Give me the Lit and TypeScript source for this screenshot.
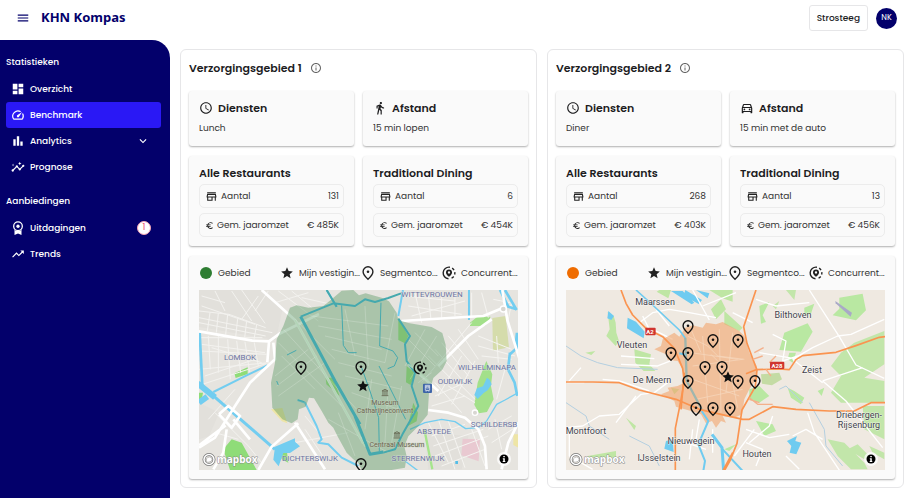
import { LitElement, html, svg, css } from "lit";
import { customElement, property } from "lit/decorators.js";

const icons: Record<string, unknown> = {
  menu: svg`<path d="M3 18h18v-2H3v2zm0-5h18v-2H3v2zm0-7v2h18V6H3z"/>`,
  dashboard: svg`<path d="M3 13h8V3H3v10zm0 8h8v-6H3v6zm10 0h8V11h-8v10zm0-18v6h8V3h-8z"/>`,
  speed: svg`<path d="M20.38 8.57l-1.23 1.85a8 8 0 0 1-.22 7.58H5.07A8 8 0 0 1 15.58 6.85l1.85-1.23A10 10 0 0 0 3.35 19a2 2 0 0 0 1.72 1h13.85a2 2 0 0 0 1.74-1 10 10 0 0 0-.27-10.44zm-9.79 6.84a2 2 0 0 0 2.83 0l5.66-8.49-8.49 5.66a2 2 0 0 0 0 2.83z"/>`,
  bars: svg`<path d="M4 9h4v11H4zm12 4h4v7h-4zm-6-9h4v16h-4z"/>`,
  insights: svg`<path d="M21 8c-1.45 0-2.26 1.44-1.93 2.51l-3.55 3.56c-.3-.09-.74-.09-1.04 0l-2.55-2.55C12.27 10.45 11.46 9 10 9c-1.45 0-2.27 1.44-1.93 2.52l-4.56 4.55C2.44 15.74 1 16.55 1 18c0 1.1.9 2 2 2 1.45 0 2.26-1.44 1.93-2.51l4.55-4.56c.3.09.74.09 1.04 0l2.55 2.55C12.73 16.55 13.54 18 15 18c1.45 0 2.27-1.44 1.93-2.52l3.56-3.55C21.56 12.26 23 11.45 23 10c0-1.1-.9-2-2-2z"/><path d="M15 9l.94-2.07L18 6l-2.06-.93L15 3l-.92 2.07L12 6l2.08.93zM3.5 11L4 9l2-.5L4 8l-.5-2L3 8l-2 .5L3 9z"/>`,
  award: svg`<circle cx="12" cy="9" r="7.4" fill="none" stroke="currentColor" stroke-width="2.2"/><circle cx="12" cy="9" r="2.8"/><path d="M6 15v9l6-2.4 6 2.4v-9l-2.500 1.600H8.500z"/>`,
  trend: svg`<path d="M16 6l2.290 2.290-4.880 4.880-4-4L2 16.590 3.410 18l6-6 4 4 6.300-6.290L22 12V6z"/>`,
  chevron: svg`<path d="M7.410 8.590L12 13.170l4.590-4.580L18 10l-6 6-6-6z"/>`,
  info: svg`<path d="M11 7h2v2h-2zm0 4h2v6h-2zm1-9C6.480 2 2 6.480 2 12s4.480 10 10 10 10-4.480 10-10S17.520 2 12 2zm0 18c-4.410 0-8-3.590-8-8s3.590-8 8-8 8 3.590 8 8-3.590 8-8 8z"/>`,
  clock: svg`<path d="M11.990 2C6.470 2 2 6.480 2 12s4.470 10 9.990 10C17.520 22 22 17.520 22 12S17.520 2 11.990 2zM12 20c-4.420 0-8-3.580-8-8s3.580-8 8-8 8 3.580 8 8-3.580 8-8 8zm.5-13H11v6l5.250 3.150.750-1.230-4.500-2.670z"/>`,
  walk: svg`<path d="M13.500 5.500c1.100 0 2-.9 2-2s-.9-2-2-2-2 .9-2 2 .9 2 2 2zM9.800 8.900L7 23h2.100l1.800-8 2.100 2v6h2v-7.500l-2.100-2 .6-3C14.800 12 16.800 13 19 13v-2c-1.900 0-3.500-1-4.300-2.400l-1-1.600c-.4-.6-1-1-1.700-1-.3 0-.5.1-.8.1L6 8.300V13h2V9.600l1.800-.7"/>`,
  car: svg`<path d="M18.920 6.010C18.720 5.420 18.160 5 17.500 5h-11c-.66 0-1.210.42-1.420 1.010L3 12v8c0 .55.45 1 1 1h1c.55 0 1-.45 1-1v-1h12v1c0 .55.45 1 1 1h1c.55 0 1-.45 1-1v-8l-2.080-5.990zM6.850 7h10.290l1.080 3.110H5.770L6.850 7zM19 17H5v-5h14v5z"/><circle cx="7.500" cy="14.500" r="1.500"/><circle cx="16.500" cy="14.500" r="1.500"/>`,
  store: svg`<path d="M18.360 9l.6 3H5.040l.6-3h12.720M20 4H4v2h16V4zm0 3H4l-1 5v2h1v6h10v-6h4v6h2v-6h1v-2l-1-5zM6 18v-4h6v4H6z"/>`,
  euro: svg`<path d="M15 18.500c-2.510 0-4.680-1.420-5.760-3.500H15v-2H8.580c-.05-.33-.08-.66-.08-1s.03-.67.08-1H15V9H9.240C10.320 6.920 12.500 5.500 15 5.500c1.610 0 3.090.59 4.230 1.570L21 5.300C19.410 3.870 17.300 3 15 3c-3.920 0-7.240 2.510-8.480 6H3v2h3.060c-.04.33-.06.66-.06 1s.02.67.06 1H3v2h3.520c1.240 3.490 4.560 6 8.480 6 2.310 0 4.410-.87 6-2.300l-1.780-1.770c-1.130.98-2.600 1.570-4.220 1.570z"/>`,
  star: svg`<path d="M12 17.270L18.180 21l-1.640-7.030L22 9.240l-7.190-.61L12 2 9.190 8.630 2 9.240l5.460 4.730L5.820 21z"/>`,
  pin: svg`<path d="M12 22.600C6.500 17.600 3.600 13.800 3.600 9.800a8.400 8.400 0 0 1 16.800 0c0 4-2.900 7.800-8.400 12.800z" fill="none" stroke="currentColor" stroke-width="2.400"/><circle cx="12" cy="9.800" r="2.200"/>`,
  rival: svg`<circle cx="12" cy="12" r="10" fill="none" stroke="currentColor" stroke-width="2.400" stroke-dasharray="31.400 4 4.400 3.600 4.400 3.600 4.400 7.030" transform="rotate(95 12 12)"/><path fill-rule="evenodd" d="M12 18.500c-3.600-3-5.200-5.300-5.200-7.500a5.200 5.200 0 0 1 10.400 0c0 2.200-1.600 4.500-5.200 7.500zM12 9a2 2 0 1 0 0 4 2 2 0 0 0 0-4z"/>`,
};

@customElement("app-icon")
class AppIcon extends LitElement {
  @property() name = "";
  static styles = css`
    :host { display: inline-flex; flex: none; width: 14px; height: 14px; }
    svg { width: 100%; height: 100%; fill: currentColor; overflow: visible; }
  `;
  render() {
    return html`<svg viewBox="0 0 24 24" aria-hidden="true">${icons[this.name]}</svg>`;
  }
}

const marker = (name: string, x: number, y: number, size = 14) =>
  svg`<svg class="marker" x=${x - size / 2} y=${y - size / 2} width=${size} height=${size} viewBox="0 0 24 24">${icons[name]}</svg>`;

const label = (text: string, x: number, y: number, kind: string) =>
  svg`<text class=${kind} x=${x} y=${y}>${text}</text>`;

const attribution = svg`
  <g fill="none" stroke="#777" stroke-width="3"><circle cx="10" cy="169.500" r="5"/></g>
  <circle cx="10" cy="169.500" r="5" fill="none" stroke="#fff" stroke-width="1.500"/>
  <path d="M7.500 172c-.6-2.600.4-5 3-5a2.400 2.400 0 0 1 .3 4.800c-1 .4-2.200.5-3.300.2z" fill="#fff" stroke="#888" stroke-width=".5"/>
  <text class="brand" x="18" y="173">mapbox</text>
  <circle cx="305" cy="169" r="7" fill="#fff" fill-opacity=".75"/>
  <circle cx="305" cy="169" r="4.500" fill="#000"/>
  <path d="M304.300 166h1.500v1.300h-1.500zM303.800 168.200h2v2.700h.5v1h-2.600v-1h.6v-1.700h-.5z" fill="#fff"/>`;

const cityMap = svg`
  <rect width="320" height="180" fill="#e6e4df"/>
  <g transform="scale(.3333) translate(-12 -12)" fill="none" stroke-linejoin="round">
    <path fill="#dedcd7" d="M12 12h190l60 60-20 90-230-40zM690 440l130 10-20 100H700zM12 350l60 30-30 70-30 10z" opacity=".5"/>
    <path fill="#8fdc78" d="M85 490l25-30 30 10 45 82h-80zM118 262l40-18v20l-36 12zM255 490l20 0 5 40-20-10zM12 320l12 0-4 22-8 0z"/>
    <path fill="#a3e08a" d="M825 110l22-18h40l-8 18-10 10h-44zM874 225l18 40-4 35 8 40-20 38-24 4-14-26 10-66zM610 95l30 55-10 22-20-10zM635 240l26 22-14 35-14-8zM655 350l14 30-4 26-26 14zM392 275l22 0 20 55-40-35z"/>
    <path fill="#d5dcab" d="M892 96l40-6 10 94-48 10z"/>
    <path fill="#e9c9d1" d="M803 458l52 2-4 66-52-18z"/>
    <path fill="#eee5a6" d="M228 370l34-4 15 46-16-6zM955 445h15v40l-15-8z"/>
    <path stroke="#f3f2ef" stroke-width="3" d="M12 75l90 10 110 40M20 60l160 55M12 95l220 45M45 80l-8 55M70 82l-6 58M98 86l-6 60M128 98l-6 55M155 105l-6 50M185 116l-8 44M12 110l200 40M12 155h190M20 175l190 25M14 195l200 10M12 250l210-20M40 150l6 100M70 150v110M98 160l8 120M125 165l12 95M150 168l14 90M178 170l12 70M50 185l150 45M30 270l150-50M22 295l190-62M40 400l80-90M60 380l50 50M110 15l60 90M60 15l30 60M140 12l70 100M190 30l-50 70M220 15l-40 60M20 30l70 20M250 15l120 90M290 15l60 50M240 50l100-30M320 35l90 20M100 420l60 60 40 50M60 440l70 20M300 470l160-30M330 430l60 90M330 390l50 60"/>
    <path stroke="#f5f4f1" stroke-width="3" d="M640 60l160 25M630 30l150 15M660 20l20 90M700 22l8 80M740 20v75M780 20v70M830 20v75M860 20l20 75M650 90l160-45M790 130l60 90M760 150l80 95M740 170l80 100M720 190l80 90M700 210l90 90M830 110l-150 180M800 210l-70 120M840 225l-70 130M780 280l60 60M760 300l80 50M850 150l100 40M850 180l110 30M860 210l90 10M905 150l5 80M930 250l-25 90M720 330l90-40M710 360l100-30M720 290l80 90M700 410l60 120M730 400l50 150M760 405l50 140M710 450l100-35M715 480l150-50M720 510l160-60M740 540l130-50M830 430l40 110M900 400l20 90M880 430l70-40M890 470l70-45M930 60l20 90M950 50l-10 50M895 40l50 10"/>
    <path stroke="#72cdf0" stroke-width="8" d="M14 140l8 160"/>
    <path stroke="#72cdf0" stroke-width="18" d="M8 292l52 42M12 350l25-18"/>
    <path stroke="#72cdf0" stroke-width="9" d="M50 325l190 165"/>
    <path stroke="#72cdf0" stroke-width="6" d="M55 318l100-50 62-30M395 12l30 50M822 12v90M308 342l22 8 35 70 15 40-10 10 30 5 40 40 50 25"/>
    <path stroke="#72cdf0" stroke-width="4" d="M645 430L690 410 740 400 780 407 812 428 850 425 875 405 905 355 930 342 970 320M630 525l40 30"/>
    <path stroke="#72cdf0" stroke-width="8" d="M915 12l25 50 25 8M930 12l35 60M945 200l-6 50 20 40 8 40M945 205l22-20"/>
    <path fill="#72cdf0" d="M240 482l60-25 0 10 15 14-30 20-20 0-14 40-16-20zM876 275l8 6 6 14-12 18-12 8-18 18-10-12 8-20 18-6zM962 140l8 0v50l-12-10z"/>
    <path stroke="#fff" stroke-width="8" d="M12 136l160 28 50 2 30-22 120-60M235 170l5 50-75 70-45 70-60 95-48 30M222 168l-5 60M200 12l100 90 205 370M12 478l80-60M72 385l28-25 35 30-25 35-38-40M95 430l-10 70-30 50M190 552l40-70 80-70M300 410l90 140M115 400l50 60M620 105l190-12 55-3 60-25M922 12l15 90 50 160M730 240l90-90 70-50M640 235l90 80M700 372l60 8 50 15 40 35 20 50 5 70M920 550l20-80 30-60"/>
    <circle cx="925" cy="69" r="9" fill="#d8d6d1" stroke="#fff" stroke-width="4"/>
    <circle cx="840" cy="380" r="8" fill="#d8d6d1" stroke="#fff" stroke-width="4"/>
    <path stroke="#a6e58c" stroke-width="7" d="M688 430l24 120"/>
    <path fill="#3f8a4e" fill-opacity=".36" d="M285 65L305 58 340 65 385 60 410 40 440 14 475 12 492 28 512 22 560 35 582 46 605 80 610 102 640 111 710 123 742 141 752 176 755 226 742 251 715 276 702 321 698 386 670 421 640 451 628 481 635 511 630 545 590 552 500 552 490 530 475 520 455 500 430 455 415 425 400 410 380 375 357 337 342 335 332 362 312 370 308 400 290 412 262 400 232 365 228 290 240 230 245 160 265 120z"/>
    <path stroke="#fff" stroke-width="3" opacity=".2" d="M250 170l190 190M265 130l220 240M300 100l120 120M240 270l100-80M245 300l120-90M250 330l140-100M260 210l100 100M350 90l230 30M370 120l220 40M390 150l170 40M410 190l160 40M430 230l160 40M450 270l170 40M470 320l140 50M450 70l30 140M510 60l10 180M600 80l-30 150M530 280l-20 150M580 290l-10 180M620 300l-30 170M640 160l80 80M660 140l70 70M690 130l-60 110M725 150l-80 130M670 290l40-30M400 400l180 100M430 380l50 130"/>
    <path stroke="#45a9ae" stroke-width="9" d="M317 92L420 285 495 415M480 390L525 505 565 498"/>
    <path stroke="#45a9ae" stroke-width="6" d="M317 92L415 52 480 60 510 40 540 48 580 36 618 22M610 98L645 150 630 175 635 225 660 260 650 300 670 360 645 405 625 440 600 490 565 500M395 12l30 50"/>
    <path stroke="#72cdf0" stroke-width="6" d="M624 12L610 90"/>
    <path stroke="#45a9ae" stroke-width="3" d="M440 58l5 120 15 22 25 0M558 50l-4 130 40 15 14 20-10 25-20 8M552 240l80 160M500 245l25 70 26 80 2 100M276 207l28-14M245 285l5 12M308 342l20 5"/>
    <path stroke="#b2d4b6" stroke-width="4" d="M300 102l210 380M640 235l60 48"/>
    <g transform="translate(684 293)"><rect width="27" height="28" rx="3" fill="#3d64a8"/><path d="M7 5h13v15H7zM9 8h9v5H9zM9 24l3-4M18 24l-3-4" stroke="#fff" stroke-width="2"/></g>
    <path stroke="#6d705b" stroke-width="3" d="M561 315l9-5 9 5zM564 316v11M570 316v11M576 316v11M560 329h20M597 442l9-5 9 5zM600 443v11M606 443v11M612 443v11M596 456h20"/>
    <rect x="781" y="525" width="8" height="9" fill="#52bde8"/>
  </g>
  ${label("LOMBOK", 41, 70, "district")}
  ${label("WITTEVROUWEN", 233, 7, "district")}
  ${label("WILHELMINAPA", 288, 80, "district")}
  ${label("OUDWIJK", 256, 94, "district")}
  ${label("SCHILDERSB", 295, 137, "district")}
  ${label("ABSTEDE", 235, 144, "district")}
  ${label("STERRENWIJK", 219, 171, "district")}
  ${label("DICHTERSWIJK", 111, 171, "district")}
  ${label("Museum", 186, 115, "poi")}
  ${label("Catharijneconvent", 186, 123, "poi")}
  ${label("Centraal Museum", 198, 157, "poi")}
  ${marker("pin", 102, 78)}${marker("pin", 162, 78)}${marker("pin", 162, 175)}
  ${marker("rival", 221, 78)}${marker("star", 164, 96)}
  ${attribution}`;

const pins = [[122, 37], [147, 51], [172, 51], [105, 64], [122, 64], [139, 78], [156, 78], [122, 92], [172, 92], [189, 92], [130, 119], [147, 119], [164, 119]];

const regionMap = svg`
  <rect width="320" height="180" fill="#efe9e1"/>
  <g transform="scale(.3333) translate(-20 -12)" fill="none" stroke-linejoin="round">
    <path fill="#bfe6a4" d="M145 78l18 12 6 20 2 30 8 25-10 15-28-30 10-20zM225 190l50 15-5 30 18 20-35 0-25-25zM300 12h35l-8 25-35-20zM455 70l30-30 15 30-30 30zM450 12h70v35l-30-10zM78 200l30-5-12 12zM200 395l30 25-5 12zM85 510l85-15v20h-80zM335 305l25 5-15 15zM495 75l55 50-10 10-45-20z"/>
    <path fill="#b9e8a2" d="M840 35l70-12 10 50-30 30-70-15 20-20zM675 140l70-28 15 25-35 60-65-5zM735 65l30-12-10 30-20 5zM600 60l30-12-20 40 10 20-15 5zM690 200l20 0-10 30-15-10zM570 310l30-10 30 30-30 20-30-10zM590 405l50 10 10 20-35 15zM685 305l20 10 30 20-10 20-30-20zM775 315l20-10-8 25zM495 490l35-15-20 20z"/>
    <path fill="#c2e6aa" d="M845 200l40-30 90-35v100l-60 40 60 10v65l-130 0-30-30 30-50-30-30zM805 460l50 10 60 60 10 20h-50l-40-40zM910 360l65 0v100l-60-30zM865 490l30-15 40 40-20 5zM930 480l45 20v20l-35-20zM680 12h30l-5 30zM640 60l20-15-10 25z"/>
    <path fill="#c4dba4" d="M605 265l55-5 8 20-30 18-30-5z"/>
    <path fill="#6fcbf0" d="M147 75l17 15-8 12-12-5zM205 95l25 12 26 30-3 20-50-30zM378 12l50 30-10 12-45-25zM410 12l35 25 5-15zM320 465l20-5 3 38-28-10zM683 465l30-15-5 15 18 5-15 35-20-5 5-20zM335 15l35 0 35 35-8 5z"/>
    <path stroke="#b4cfe0" stroke-width="3" d="M20 180l45 30 50 20 60 15 120 5M20 350l60 40 10 30 60 40M210 450l60 30 30 60M750 350l45 80 5 50 50 60M660 310l20-10 50 50"/>
    <path stroke="#fff" stroke-width="4" d="M20 425l50-5 50-30 60-5 65-60 40-5 40-30M65 245l-40 45 50 0M185 235l110 5 50-20M185 210l100 8M30 440v70l70 40M130 280l50 5 90 30M230 330l-60 80M240 110l40-30 50-10 60 10 80 15M250 90l20 40M290 70l40 50M280 130l60 30M400 12l50 90M430 60l100-40M520 80l60 30M590 40l60 20 100-10M750 12l90 140 50 85 85 40M640 145l40 20-10 60 60-20M790 285l120-40M790 285l70 60 110 140M600 200l120 20M700 220l90 70M745 380l20 60 80 120M640 390l-10 30-60 50M560 430l70 25 60-10M560 470l50 20-20 50M700 450l40-20 50 30M680 510l40 40M700 220l60-35 75-35 40-5 100-45M585 430l-60 80M400 430l-10 90M460 430v70M380 470l60 20M420 400l-10 60"/>
    <path fill="#f2a56c" fill-opacity=".6" d="M310 160L345 140 360 152 378 125 400 118 430 125 440 110 470 115 490 108 512 120 540 135 555 150 570 200 592 240 590 280 570 310 555 340 548 385 525 395 490 390 500 410 485 405 470 425 458 405 440 412 425 385 395 375 350 362 345 345 305 325 330 315 325 305 355 300 375 290 370 250 355 225 325 222 320 205 285 190 305 180z"/>
    <path stroke="#f7d9bf" stroke-width="3" opacity=".7" d="M385 150l60 30 30 30 80 10M395 130l30 70M395 200l140 20M400 240l150-20M430 150l15 200M480 130l5 250M520 140l-20 180M400 280l140 50M410 340l140-30M455 205l60 60 20 100"/>
    <path stroke="#6fcbf0" stroke-width="5" d="M230 12l50 45 80 75 18 25"/>
    <path stroke="#9fb6ae" stroke-width="7" d="M378 155l4 130 45 85"/>
    <path stroke="#6fcbf0" stroke-width="6" d="M427 375l20 30-30 70 20 50-5 30M490 490l60 65M360 202l18 4"/>
    <path stroke="#6fcbf0" stroke-width="9" d="M458 445l30 40 5 70"/>
    <path stroke="#fa9450" stroke-width="5" d="M185 12l15 40 20 35 40 40 50 25 35 35 25 60 5 40-15 80-12 60v165M20 288h80l80 2 60 22 110 28 70 30 130 30 20 0 70-38 70 8 100 5h75l50-25 95 0M590 12l-37 110 10 50 30 80-5 50-40 70-15 100-20 50-25 45M520 500l-28 52"/>
    <path stroke="#fa9450" stroke-width="5" d="M560 263l30-12 70-2 30 2 20-30 20-12 100-10 60-20 70-25 25-3M375 260l-10 110"/>
    <path stroke="#f4b08a" stroke-width="4" d="M585 200l28-15M580 220l30-10M630 230l20-20M620 250l15 20M570 335l25 20 45 0M600 350l-30-10"/>
    <path fill="#a9a9c7" d="M828 45l50 35-4 12-45-40z"/>
    <rect x="258" y="125" width="31" height="23" rx="3" fill="#d0342f"/>
    <rect x="632" y="227" width="43" height="22" rx="3" fill="#d0342f"/>
  </g>
  ${label("A2", 84, 44, "shield")}
  ${label("A28", 211, 78, "shield")}
  ${label("Maarssen", 89, 15, "town")}
  ${label("Vleuten", 66, 58, "town")}
  ${label("De Meern", 86, 93, "town")}
  ${label("Montfoort", 20, 144, "town")}
  ${label("Nieuwegein", 125, 154, "town")}
  ${label("IJsselstein", 93, 171, "town")}
  ${label("Bilthoven", 227, 28, "town")}
  ${label("Zeist", 246, 83, "town")}
  ${label("Driebergen-", 293, 128, "town")}
  ${label("Rijsenburg", 293, 138, "town")}
  ${label("Houten", 191, 167, "town")}
  ${pins.map(([x, y]) => marker("pin", x, y))}
  ${marker("star", 162, 87)}
  ${attribution}`;

@customElement("area-map")
class AreaMap extends LitElement {
  @property() region = "city";
  static styles = css`
    :host { display: block; }
    .map { display: block; width: 100%; }
    .marker { fill: #111; color: #111; overflow: visible; }
    text { font-family: "Roboto", "Liberation Sans", sans-serif; text-anchor: middle; paint-order: stroke; stroke-linejoin: round; }
    .district { font-size: 8px; fill: #6c74a3; stroke: #eeeeea; stroke-width: 1px; stroke-opacity: .5; }
    .poi { font-size: 7px; fill: #6e6650; stroke: #c3d3bf; stroke-width: 1px; stroke-opacity: .6; }
    .town { font-size: 9px; fill: #3f3f4a; stroke: #fff; stroke-width: 1px; stroke-opacity: .7; }
    .shield { font-size: 6px; font-weight: 700; fill: #fff; }
    .brand { font-family: "Open Sans", sans-serif; font-size: 10px; font-weight: 700; text-anchor: start; fill: #fff; stroke: #888; stroke-width: 1px; }
  `;
  render() {
    return html`<svg class="map" viewBox="0 0 319 180" role="img" aria-label="Kaart van het gebied">
      ${this.region === "city" ? cityMap : regionMap}
    </svg>`;
  }
}

interface Area {
  title: string; service: string; travelIcon: string; travel: string;
  region: string; groups: { name: string; count: string; revenue: string }[];
}

@customElement("area-panel")
class AreaPanel extends LitElement {
  @property({ attribute: false }) area!: Area;
  static styles = css`
    :host { display: block; min-width: 0; box-sizing: border-box; border: 1px solid #e6e6e8; border-radius: 6px; padding: 8px; }
    h2, h3, p, dl, dd, ul { margin: 0; padding: 0; }
    header { display: flex; align-items: center; gap: 8px; height: 20px; margin-bottom: 13px; }
    h2 { font-size: 11px; line-height: 20px; font-weight: 600; }
    header button { display: flex; padding: 0; border: 0; background: none; color: #666; }
    header app-icon { width: 12px; height: 12px; }
    .grid { display: grid; grid-template-columns: 1fr 1fr; gap: 10px 9px; }
    .card { box-sizing: border-box; min-width: 0; padding: 8px 10px 9px; background: #fafafa; border-radius: 3px; box-shadow: 0 1px 2px rgba(0, 0, 0, .32); }
    h3 { display: flex; align-items: center; gap: 5px; font-size: 11px; line-height: 18px; font-weight: 600; }
    .card > p { margin-top: 3px; padding-bottom: 1px; font-size: 9px; line-height: 16px; color: #333; }
    dl { display: grid; gap: 5px; margin-top: 2px; }
    dl div { display: flex; align-items: center; height: 22px; padding: 0 4px 0 5px; border: 1px solid #ececec; border-radius: 5px; font-size: 9px; color: #333; }
    dt { display: flex; align-items: center; gap: 3px; flex: 1; }
    dt app-icon { width: 13px; height: 13px; color: #222; }
    dt .small { width: 9px; height: 9px; }
    .wide { grid-column: 1 / -1; }
    ul { display: grid; grid-template-columns: repeat(4, 1fr); margin: 0 -5px 8px 0; list-style: none; }
    li { display: flex; align-items: center; gap: 5px; height: 18px; font-size: 9px; color: #333; white-space: nowrap; }
    li app-icon { color: #222; }
    .dot { width: 12px; height: 12px; margin: 0 1px; border-radius: 50%; background: #2e7d32; }
    .dot.orange { background: #ef6c00; }
  `;
  render() {
    const a = this.area;
    return html`
      <header><h2>${a.title}</h2><button aria-label="Informatie"><app-icon name="info"></app-icon></button></header>
      <div class="grid">
        <section class="card"><h3><app-icon name="clock"></app-icon>Diensten</h3><p>${a.service}</p></section>
        <section class="card"><h3><app-icon name=${a.travelIcon}></app-icon>Afstand</h3><p>${a.travel}</p></section>
        ${a.groups.map((g) => html`<section class="card"><h3>${g.name}</h3>
          <dl>
            <div><dt><app-icon name="store"></app-icon>Aantal</dt><dd>${g.count}</dd></div>
            <div><dt><app-icon class="small" name="euro"></app-icon>Gem. jaaromzet</dt><dd>${g.revenue}</dd></div>
          </dl></section>`)}
        <section class="card wide">
          <ul>
            <li><span class="dot ${a.region === "city" ? "" : "orange"}"></span>Gebied</li>
            <li><app-icon name="star"></app-icon>Mijn vestigin...</li>
            <li><app-icon name="pin"></app-icon>Segmentco...</li>
            <li><app-icon name="rival"></app-icon>Concurrent...</li>
          </ul>
          <area-map region=${a.region}></area-map>
        </section>
      </div>`;
  }
}

const areas: Area[] = [
  { title: "Verzorgingsgebied 1", service: "Lunch", travelIcon: "walk", travel: "15 min lopen", region: "city",
    groups: [{ name: "Alle Restaurants", count: "131", revenue: "€ 485K" }, { name: "Traditional Dining", count: "6", revenue: "€ 454K" }] },
  { title: "Verzorgingsgebied 2", service: "Diner", travelIcon: "car", travel: "15 min met de auto", region: "province",
    groups: [{ name: "Alle Restaurants", count: "268", revenue: "€ 403K" }, { name: "Traditional Dining", count: "13", revenue: "€ 456K" }] },
];

@customElement("app-root")
class AppRoot extends LitElement {
  static styles = css`
    :host { display: grid; grid-template: 40px 1fr / 170px minmax(0, 1fr); min-height: 100vh; background: #fff; color: #1d1d1f; font-family: "Poppins", "Inter", "Liberation Sans", sans-serif; }
    button { font: inherit; cursor: pointer; }
    .top { grid-column: 1 / -1; display: flex; align-items: center; gap: 8px; padding: 0 10px 4px 16px; }
    .menu { display: flex; padding: 0; border: 0; background: none; color: #03006b; }
    h1 { flex: 1; margin: 0 0 2px 3px; font: 700 13px/20px "Noto Sans", sans-serif; color: #03006b; }
    .place { height: 26px; padding: 0 7px; border: 1px solid #e6e6e8; border-radius: 3px; background: #fff; color: #1d1d1f; font-size: 9px; font-weight: 500; }
    .avatar { width: 21px; height: 21px; padding: 0; border: 0; border-radius: 50%; background: #03006b; color: #fff; font-size: 8px; }
    nav { padding: 14px 9px 0 6px; background: #03006b; color: #fff; border-top-right-radius: 18px; }
    h2 { margin: 0 0 6px; font-size: 9px; line-height: 16px; font-weight: 500; }
    ul { margin: 0 0 13px; padding: 0; list-style: none; }
    a { display: flex; align-items: center; gap: 5px; height: 26px; padding: 0 10px 0 5px; border-radius: 3px; color: #fff; font-size: 9px; font-weight: 500; text-decoration: none; }
    a span { flex: 1; }
    a.active { background: #2a18f5; }
    .end { margin-right: 1px; }
    .badge { flex: none; width: 12px; height: 12px; border: 1px solid #f6a5b5; border-radius: 50%; background: #fff; color: #f0607c; font-size: 8px; line-height: 12px; font-style: normal; text-align: center; }
    main { display: grid; grid-template-columns: repeat(2, minmax(0, 1fr)); align-items: start; gap: 10px; padding: 9px 3px 9px 10px; }
  `;
  item(icon: string, text: string, end: unknown = "", active = false) {
    return html`<li><a href="#" class=${active ? "active" : ""}><app-icon name=${icon}></app-icon><span>${text}</span>${end}</a></li>`;
  }
  render() {
    return html`
      <header class="top">
        <button class="menu" aria-label="Menu"><app-icon name="menu"></app-icon></button>
        <h1>KHN Kompas</h1>
        <button class="place">Strosteeg</button>
        <button class="avatar">NK</button>
      </header>
      <nav>
        <h2>Statistieken</h2>
        <ul>
          ${this.item("dashboard", "Overzicht")}
          ${this.item("speed", "Benchmark", "", true)}
          ${this.item("bars", "Analytics", html`<app-icon class="end" name="chevron"></app-icon>`)}
          ${this.item("insights", "Prognose")}
        </ul>
        <h2>Aanbiedingen</h2>
        <ul>
          ${this.item("award", "Uitdagingen", html`<i class="badge">1</i>`)}
          ${this.item("trend", "Trends")}
        </ul>
      </nav>
      <main>${areas.map((a) => html`<area-panel .area=${a}></area-panel>`)}</main>`;
  }
}
